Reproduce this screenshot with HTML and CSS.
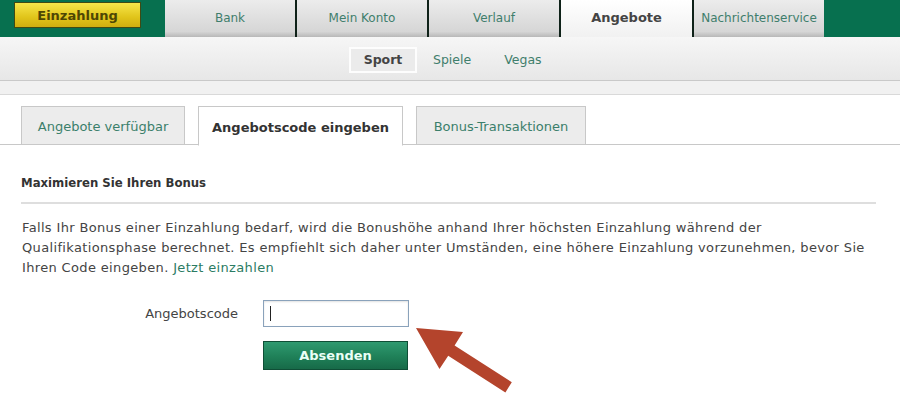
FILE: index.html
```html
<!DOCTYPE html>
<html lang="de">
<head>
<meta charset="utf-8">
<title>Angebote</title>
<link rel="stylesheet" href="styles.css">
</head>
<body>
<div class="page">
  <header class="topnav">
    <a class="deposit">Einzahlung</a>
    <nav class="maintabs">
      <a class="mtab">Bank</a>
      <a class="mtab">Mein Konto</a>
      <a class="mtab">Verlauf</a>
      <a class="mtab active">Angebote</a>
      <a class="mtab">Nachrichtenservice</a>
    </nav>
  </header>
  <nav class="subnav">
    <a class="sub active">Sport</a>
    <a class="sub">Spiele</a>
    <a class="sub">Vegas</a>
  </nav>
  <div class="strip"></div>

  <div class="tabs">
    <a class="tab t1">Angebote verfügbar</a>
    <a class="tab t2 active">Angebotscode eingeben</a>
    <a class="tab t3">Bonus-Transaktionen</a>
  </div>

  <section class="content">
    <h2 class="heading">Maximieren Sie Ihren Bonus</h2>
    <p class="info">Falls Ihr Bonus einer Einzahlung bedarf, wird die Bonushöhe anhand Ihrer höchsten Einzahlung während der Qualifikationsphase berechnet. Es empfiehlt sich daher unter Umständen, eine höhere Einzahlung vorzunehmen, bevor Sie Ihren Code eingeben. <a class="link">Jetzt einzahlen</a></p>
    <form class="codeform">
      <div class="row">
        <label class="label">Angebotscode</label>
        <div class="field"><span class="caret"></span></div>
      </div>
      <div class="row">
        <span class="label"></span>
        <button type="button" class="submit">Absenden</button>
      </div>
    </form>
  </section>

  <svg class="arrow" width="900" height="398" viewBox="0 0 900 398">
    <polygon points="416,328 463,332 454.6,345.5 511.8,382.2 505.4,392.4 448.2,355.7 439.5,369.1" fill="#b4442c"/>
  </svg>
</div>
</body>
</html>
```
FILE: styles.css
```css
* { box-sizing: border-box; }
html, body { margin: 0; padding: 0; background: #fff; }
body { font-family: "DejaVu Sans", Verdana, sans-serif; color: #444; }
a { text-decoration: none; cursor: pointer; }

.page { position: relative; width: 900px; height: 398px; overflow: hidden; }

.topnav {
  height: 37px;
  background: #07704f;
  display: flex;
  align-items: flex-start;
  padding-left: 14px;
}
.deposit {
  margin-top: 2px;
  width: 127px;
  height: 26px;
  display: flex;
  align-items: center;
  justify-content: center;
  background: linear-gradient(#f7e64a, #e0c41a 60%, #cfae10);
  border: 1px solid #3f4a14;
  color: #4e4604;
  font-weight: bold;
  font-size: 13px;
}
.maintabs {
  margin-left: 24px;
  display: flex;
  gap: 2px;
  background: #0f2219;
  height: 37px;
}
.mtab {
  width: 130px;
  height: 37px;
  display: flex;
  align-items: center;
  justify-content: center;
  background: linear-gradient(#ececec, #d6d6d6 85%, #b8b8b8);
  color: #3f7e6c;
  font-size: 12px;
  padding-bottom: 2px;
}
.mtab.active {
  width: 131px;
  background: linear-gradient(#ffffff, #f1f1f1);
  color: #444;
  font-weight: bold;
  font-size: 13px;
}

.subnav {
  height: 44px;
  background: linear-gradient(#f6f6f6, #e7e7e7);
  border-bottom: 1px solid #c9c9c9;
  display: flex;
  align-items: center;
  padding-left: 349px;
  padding-top: 2px;
}
.sub {
  font-size: 12.5px;
  color: #3f7e6c;
  margin-right: 33px;
}
.sub.active {
  width: 68px;
  height: 26px;
  display: flex;
  align-items: center;
  justify-content: center;
  border: 2px solid #fdfdfd;
  background: #ebebeb;
  color: #444;
  font-weight: bold;
  margin-right: 16px;
}
.strip {
  height: 14px;
  background: #f1f1f1;
  border-bottom: 1px solid #d9d9d9;
}

.tabs {
  margin-top: 11px;
  padding-left: 21px;
  display: flex;
  gap: 13px;
  border-bottom: 1px solid #c8c8c8;
  height: 39px;
}
.tab {
  height: 39px;
  display: flex;
  align-items: center;
  justify-content: center;
  border: 1px solid #c8c8c8;
  background: #ececec;
  color: #3b7f6b;
  font-size: 13px;
  padding-top: 2px;
}
.t1 { width: 164px; }
.t2 { width: 205px; }
.t3 { width: 170px; }
.tab.active {
  background: #fff;
  border-bottom-color: #fff;
  height: 40px;
  color: #333;
  font-weight: bold;
}

.content { padding: 0 20px 0 21px; }
.heading {
  margin: 30px 4px 0 0;
  font-family: "DejaVu Sans Condensed", "DejaVu Sans", sans-serif;
  font-size: 13px;
  font-weight: bold;
  color: #333;
  padding-bottom: 12px;
  border-bottom: 2px solid #dedede;
}
.info {
  margin: 14px 0 0 1px;
  max-width: 858px;
  font-family: "DejaVu Sans", sans-serif;
  font-size: 13px;
  letter-spacing: 0.35px;
  line-height: 20px;
  color: #444;
}
.link { color: #2b7b63; }

.codeform { margin-top: 22px; display: flex; flex-direction: column; gap: 14px; }
.row { display: flex; align-items: center; }
.label {
  width: 242px;
  text-align: right;
  padding-right: 25px;
  font-size: 13px;
  color: #444;
}
.field {
  width: 146px;
  height: 27px;
  border: 1px solid #8aa2bb;
  box-shadow: inset 0 1px 2px rgba(0,0,0,0.12);
  background: #fff;
  display: flex;
  align-items: center;
  padding-left: 6px;
}
.caret { width: 1px; height: 15px; background: #222; }
.submit {
  width: 145px;
  height: 29px;
  border: 1px solid #0f4e36;
  background: linear-gradient(#2f9a70, #1f8058 55%, #176a48);
  color: #eafff6;
  font-family: "DejaVu Sans", sans-serif;
  font-weight: bold;
  font-size: 13px;
  padding: 0;
}

.arrow { position: absolute; left: 0; top: 0; pointer-events: none; }
```
